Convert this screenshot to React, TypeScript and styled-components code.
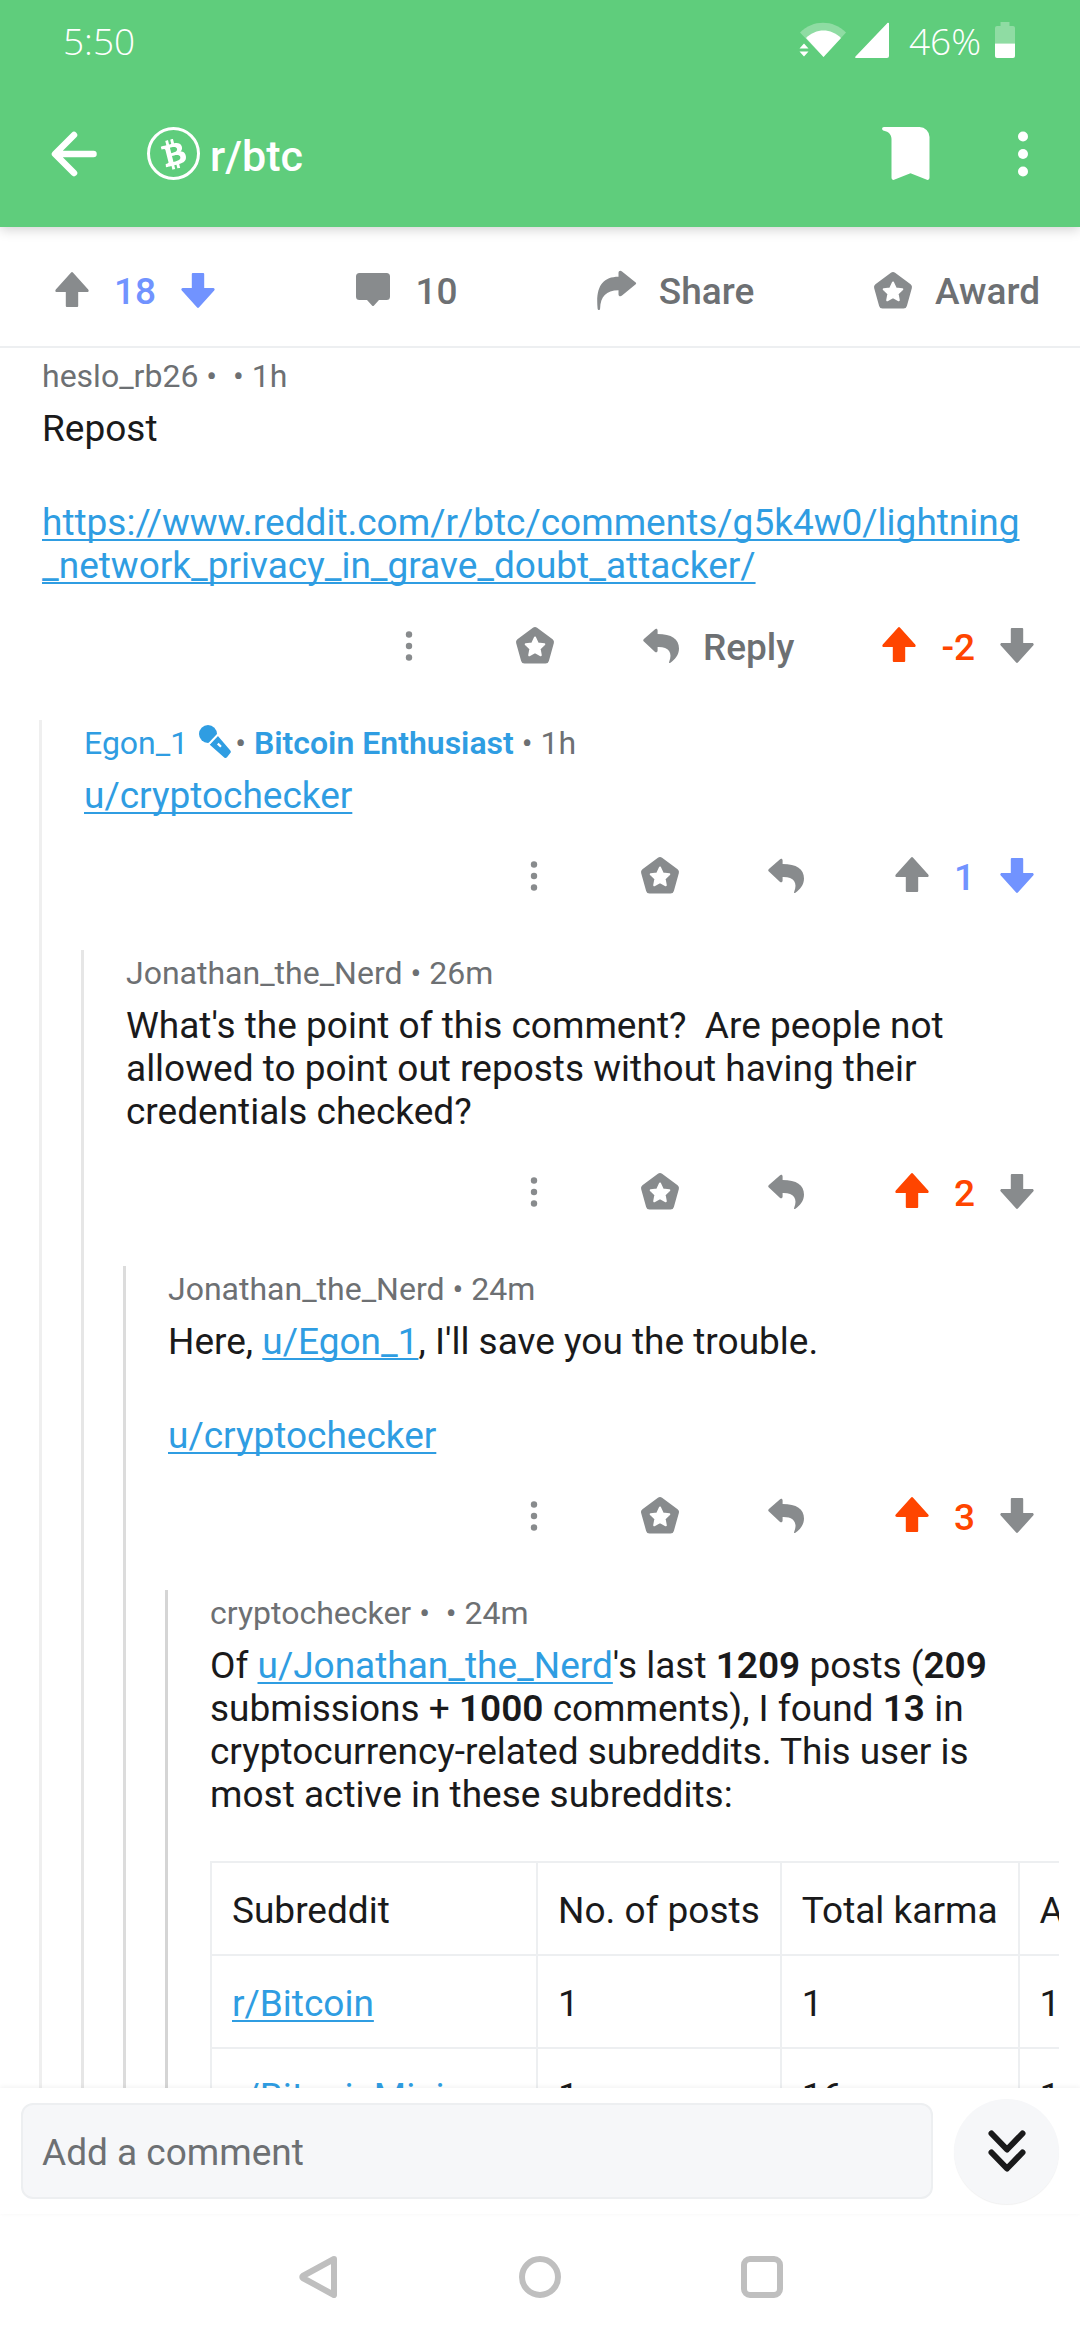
import React from "react";
import styled, { createGlobalStyle, css } from "styled-components";
import { FaBtc } from "react-icons/fa";

const color = {
  green: "#5fcd7c",
  ink: "#1a1a1b",
  meta: "#6d7073",
  icon: "#888b8d",
  link: "#2f9de2",
  up: "#ff4500",
  down: "#7193ff",
  line: "#edeff1",
  field: "#f6f7f9",
  nav: "#bfbfbf",
};

const GlobalStyle = createGlobalStyle`
  * { box-sizing: border-box; }
  body {
    margin: 0;
    background: #fff;
    color: ${color.ink};
    font-family: Roboto, "Noto Sans", sans-serif;
  }
`;

const Screen = styled.div`
  display: flex;
  flex-direction: column;
  height: 100vh;
  overflow: hidden;
`;

/* ---------- top ---------- */

const Header = styled.header`
  flex: none;
  position: relative;
  z-index: 1;
  background: ${color.green};
  color: #fff;
  box-shadow: 0 2px 12px rgba(0, 0, 0, 0.2);
`;

const StatusBar = styled.div`
  display: flex;
  align-items: center;
  justify-content: space-between;
  height: 80px;
  padding: 0 65px 0 63px;
  font-family: "Open Sans", "Noto Sans", sans-serif;
  font-weight: 350;
  font-size: 37px;
`;

const StatusIcons = styled.div`
  display: flex;
  align-items: center;
  gap: 8px;
`;

const BatteryLabel = styled.span`
  padding: 0 6px 0 12px;
`;

const Toolbar = styled.div`
  display: flex;
  align-items: center;
  height: 147px;
  padding: 0 26px 0 42px;
`;

const bareButton = css`
  display: flex;
  align-items: center;
  justify-content: center;
  margin: 0;
  padding: 0;
  border: 0;
  background: none;
  color: inherit;
  font: inherit;
`;

const ToolbarButton = styled.button`
  ${bareButton}
  width: 63px;
  height: 63px;
`;

const Community = styled.div`
  display: flex;
  flex: 1;
  align-items: center;
  gap: 10px;
  padding-left: 42px;
`;

const CommunityIcon = styled.span`
  display: flex;
  align-items: center;
  justify-content: center;
  width: 53px;
  height: 53px;
  border: 3px solid #fff;
  border-radius: 50%;
`;

const CommunityName = styled.h1`
  margin: 0;
  padding-top: 4px;
  font-size: 43px;
  font-weight: 500;
  line-height: 50px;
`;

const ToolbarActions = styled.div`
  display: flex;
  gap: 54px;
`;

/* ---------- post actions ---------- */

const PostBar = styled.div`
  flex: none;
  display: grid;
  grid-template-columns: repeat(4, minmax(0, 1fr));
  height: 121px;
  padding-top: 8px;
  border-bottom: 2px solid ${color.line};
  color: ${color.meta};
  font-size: 37px;
  font-weight: 500;
`;

const PostCell = styled.div<{ $end?: boolean }>`
  display: flex;
  align-items: center;
  justify-content: ${(p) => (p.$end ? "flex-end" : "center")};
  padding-right: ${(p) => (p.$end ? "40px" : "0")};
`;

const PostButton = styled.button`
  ${bareButton}
  gap: 21px;
`;

const Vote = styled.div`
  display: flex;
  align-items: center;
  gap: 21px;
`;

const VoteButton = styled.button<{ $tint?: string }>`
  ${bareButton}
  color: ${(p) => p.$tint ?? color.icon};
`;

const Label = styled.span`
  padding-top: 3px;
  line-height: 44px;
`;

const Score = styled(Label)<{ $tint: string }>`
  color: ${(p) => p.$tint};
`;

const Glyph = styled.svg`
  flex: none;
  display: block;
  fill: currentColor;
`;

const GrayGlyph = styled(Glyph)`
  color: ${color.icon};
`;

/* ---------- comments ---------- */

const Feed = styled.main`
  flex: 1 1 0;
  min-height: 0;
  overflow: hidden;
  padding-top: 5px;
`;

const depthLines = ["#efefef", "#e6e6e6", "#dcdcdc", "#d5d5d5"];

const Thread = styled.div<{ $depth: number }>`
  margin-left: 39px;
  border-left: 3px solid ${(p) => depthLines[p.$depth]};
`;

const CommentBox = styled.article`
  padding: 4px 42px 32px;
`;

const Meta = styled.div`
  display: flex;
  align-items: center;
  height: 38px;
  color: ${color.meta};
  font-size: 32px;
  line-height: 38px;
  white-space: pre;
`;

const OpAuthor = styled.span`
  display: flex;
  align-items: center;
  gap: 11px;
  padding-right: 4px;
  color: ${color.link};
`;

const Flair = styled.span`
  color: ${color.link};
  font-weight: 600;
`;

const Text = styled.div`
  display: flex;
  flex-direction: column;
  gap: 51px;
  margin-top: 12px;
  font-size: 37px;
  line-height: 43px;
`;

const Paragraph = styled.p`
  margin: 0;
  white-space: pre-wrap;
`;

const Link = styled.a`
  color: ${color.link};
  text-decoration: underline;
  text-decoration-thickness: 2px;
  text-decoration-skip-ink: none;
  text-underline-offset: 4px;
`;

const Strong = styled.strong`
  font-weight: 600;
`;

const CommentActions = styled.div`
  display: flex;
  justify-content: flex-end;
  align-items: center;
  height: 84px;
  margin-top: 17px;
  color: ${color.meta};
  font-size: 37px;
  font-weight: 500;
`;

const ActionButton = styled.button`
  ${bareButton}
  gap: 21px;
  height: 84px;
  padding: 0 42px;
`;

const CommentVote = styled(Vote)`
  padding-left: 42px;
`;

const TableScroll = styled.div`
  overflow: hidden;
  margin: 45px -21px 0 0;
`;

const Table = styled.table`
  border-collapse: collapse;
  font-size: 37px;
  line-height: 43px;
  white-space: nowrap;

  th,
  td {
    padding: 26px 20px 22px;
    border: 2px solid ${color.line};
    text-align: left;
    font-weight: 400;
  }

  th:first-child {
    min-width: 326px;
  }
`;

/* ---------- bottom ---------- */

const Composer = styled.form`
  flex: none;
  position: relative;
  z-index: 1;
  display: flex;
  align-items: center;
  gap: 21px;
  height: 126px;
  padding: 0 21px;
  background: #fff;
  box-shadow: 0 -1px 5px rgba(0, 0, 0, 0.06);
`;

const CommentField = styled.input`
  flex: 1;
  min-width: 0;
  height: 96px;
  padding: 2px 19px 0;
  border: 2px solid ${color.line};
  border-radius: 12px;
  background: ${color.field};
  color: ${color.ink};
  font: 400 37px Roboto, "Noto Sans", sans-serif;
  outline: none;

  &::placeholder {
    color: ${color.meta};
    opacity: 1;
  }
`;

const JumpButton = styled.button`
  ${bareButton}
  flex: none;
  width: 105px;
  height: 105px;
  border-radius: 50%;
  background: ${color.field};
  color: ${color.ink};
  box-shadow: 0 1px 1px rgba(0, 0, 0, 0.06);
`;

const NavBar = styled.nav`
  flex: none;
  display: flex;
  align-items: center;
  justify-content: center;
  gap: 180px;
  height: 126px;
  background: #fff;
  color: ${color.nav};
`;

const NavButton = styled.button`
  ${bareButton}
`;

/* ---------- icons ---------- */

const UpIcon = () => (
  <Glyph width="42" height="42" viewBox="0 0 42 42">
    <path d="M19.9 2.7a1.5 1.5 0 0 1 2.2 0L37.2 19.4c1 1.1.4 2.7-1.1 2.7H27.2V36a1 1 0 0 1-1 1H15.8a1 1 0 0 1-1-1V22.1H5.9c-1.5 0-2.1-1.6-1.1-2.7z" />
  </Glyph>
);

const DownIcon = () => (
  <Glyph width="42" height="42" viewBox="0 0 42 42">
    <path d="M19.9 37.3a1.5 1.5 0 0 0 2.2 0L37.2 20.6c1-1.1.4-2.7-1.1-2.7H27.2V4a1 1 0 0 0-1-1H15.8a1 1 0 0 0-1 1V17.9H5.9c-1.5 0-2.1 1.6-1.1 2.7z" />
  </Glyph>
);

const CommentIcon = () => (
  <GrayGlyph width="42" height="42" viewBox="0 0 42 42">
    <path d="M7.5 3h27A3.5 3.5 0 0 1 38 6.5V26.5A3.5 3.5 0 0 1 34.5 30H27l-5 5.4a1.4 1.4 0 0 1-2 0L15 30H7.5A3.5 3.5 0 0 1 4 26.5V6.5A3.5 3.5 0 0 1 7.5 3z" />
  </GrayGlyph>
);

const ShareIcon = () => (
  <GrayGlyph width="42" height="42" viewBox="0 0 42 42">
    <path d="M22.5 3c0-2.2 2-2.8 3.5-1.5L39.4 12.2c1 .8 1 1.6 0 2.4L26 25.6c-1.500 1.300-3.500.7-3.500-1.400V20.300C10 20.500 4.600 26.500 4.100 38.500c-.1 2-2.300 2-2.500 0C-.5 17.500 6 6.800 22.500 6.800z" />
  </GrayGlyph>
);

const ReplyIcon = () => (
  <GrayGlyph width="42" height="42" viewBox="0 0 42 42">
    <path d="M14.8 4.400c1.400-1.100 2.800-.5 2.800 1.200V9C31.500 9 39 14 39 23.500 39 30 35 34.500 30.400 37.800c-1 .7-1.700.2-1.200-1C33 27.500 28.500 21.600 17.600 22v3.500c0 1.700-1.400 2.300-2.800 1.200L3.900 16.600c-.9-.8-.9-1.800 0-2.600z" />
  </GrayGlyph>
);

const AwardIcon = () => (
  <GrayGlyph width="42" height="42" viewBox="0 0 42 42">
    <path
      d="M21 5.500 36.500 17 31.500 35H10.500L5.500 17z"
      stroke="currentColor"
      strokeWidth="7"
      strokeLinejoin="round"
    />
    <path
      d="M21 12.500l2.800 5.900 6.500.9-4.700 4.500 1.200 6.500L21 27.100l-5.800 3.200 1.200-6.500-4.700-4.500 6.500-.9z"
      fill="#fff"
      stroke="#fff"
      strokeWidth="2"
      strokeLinejoin="round"
    />
  </GrayGlyph>
);

const DotsIcon = () => (
  <GrayGlyph width="42" height="42" viewBox="0 0 42 42">
    <circle cx="21" cy="9.500" r="3.200" />
    <circle cx="21" cy="21" r="3.200" />
    <circle cx="21" cy="32.500" r="3.200" />
  </GrayGlyph>
);

const MicIcon = () => (
  <Glyph width="32" height="36" viewBox="0 0 32 36">
    <circle cx="9" cy="9" r="9" />
    <path d="M18.500 10.500 31.300 25.500a2 2 0 0 1 0 2.600L28 32.300a2 2 0 0 1-2.800.2L10.500 19.500z" />
    <path d="M19.500 9 8.500 20.500" stroke="#fff" strokeWidth="2" />
    <path d="M18.800 18.600l3.200 3.200" stroke="#fff" strokeWidth="2.200" />
  </Glyph>
);

/* ---------- comment parts ---------- */

type Direction = "up" | "down";

const VoteControls = ({ score, voted }: { score: string; voted: Direction }) => (
  <>
    <VoteButton aria-label="Upvote" $tint={voted === "up" ? color.up : undefined}>
      <UpIcon />
    </VoteButton>
    <Score $tint={color[voted]}>{score}</Score>
    <VoteButton aria-label="Downvote" $tint={voted === "down" ? color.down : undefined}>
      <DownIcon />
    </VoteButton>
  </>
);

type CommentProps = {
  meta: React.ReactNode;
  children: React.ReactNode;
  score?: string;
  voted?: Direction;
  replyLabel?: boolean;
};

const Comment = ({ meta, children, score, voted = "up", replyLabel }: CommentProps) => (
  <CommentBox>
    <Meta>{meta}</Meta>
    {children}
    {score && (
      <CommentActions>
        <ActionButton aria-label="More">
          <DotsIcon />
        </ActionButton>
        <ActionButton aria-label="Award">
          <AwardIcon />
        </ActionButton>
        <ActionButton aria-label="Reply">
          <ReplyIcon />
          {replyLabel && <Label>Reply</Label>}
        </ActionButton>
        <CommentVote>
          <VoteControls score={score} voted={voted} />
        </CommentVote>
      </CommentActions>
    )}
  </CommentBox>
);

const rows = [
  ["r/Bitcoin", "1", "1", "1"],
  ["r/BitcoinMining", "1", "16", "1"],
];

export default function App() {
  return (
    <Screen>
      <GlobalStyle />
      <Header>
        <StatusBar>
          <span>5:50</span>
          <StatusIcons>
            <Glyph width="48" height="36" viewBox="0 0 48 36">
              <path d="M1 10.500C14-2.500 34-2.500 47 10.500L24.500 35z" opacity=".3" />
              <path d="M7 16C17 6 32 6 42 16L24.500 35z" />
              <path d="M.5 26.500 5 21.500l4.500 5zM.5 29.500h9L5 34.500z" />
            </Glyph>
            <Glyph width="34" height="36" viewBox="0 0 34 36">
              <path d="M.5 34.500 32 1.500a1 1 0 0 1 2 .5V34a2 2 0 0 1-2 2H1c-1 0-1.200-.8-.5-1.500z" />
            </Glyph>
            <BatteryLabel>46%</BatteryLabel>
            <Glyph width="20" height="36" viewBox="0 0 20 36">
              <path d="M5.500 0h9v4H18a2 2 0 0 1 2 2v15.500H0V6a2 2 0 0 1 2-2h3.500z" opacity=".3" />
              <path d="M0 21.500h20V34a2 2 0 0 1-2 2H2a2 2 0 0 1-2-2z" />
            </Glyph>
          </StatusIcons>
        </StatusBar>
        <Toolbar>
          <ToolbarButton aria-label="Back">
            <Glyph width="46" height="46" viewBox="0 0 46 46">
              <path
                d="M23 4 4 23l19 19M4.500 23H42.500"
                fill="none"
                stroke="currentColor"
                strokeWidth="6.500"
                strokeLinecap="round"
                strokeLinejoin="round"
              />
            </Glyph>
          </ToolbarButton>
          <Community>
            <CommunityIcon>
              <FaBtc size={30} transform="rotate(-14)" />
            </CommunityIcon>
            <CommunityName>r/btc</CommunityName>
          </Community>
          <ToolbarActions>
            <ToolbarButton aria-label="Save">
              <Glyph width="48" height="53" viewBox="0 0 48 53">
                <path d="M2 0H37.500A10 10 0 0 1 47.500 10V50.500c0 2-1.500 2.900-3.200 2.100L28.500 46.200 12.700 52.600C11 53.400 9.500 52.500 9.500 50.500V12C9.500 7.500 6.500 4.500 2 3.700-.5 3.200-.5 0 2 0z" />
              </Glyph>
            </ToolbarButton>
            <ToolbarButton aria-label="Menu">
              <Glyph width="46" height="46" viewBox="0 0 46 46">
                <circle cx="23" cy="5.500" r="5" />
                <circle cx="23" cy="23" r="5" />
                <circle cx="23" cy="40.500" r="5" />
              </Glyph>
            </ToolbarButton>
          </ToolbarActions>
        </Toolbar>
      </Header>

      <PostBar>
        <PostCell>
          <Vote>
            <VoteControls score="18" voted="down" />
          </Vote>
        </PostCell>
        <PostCell>
          <PostButton>
            <CommentIcon />
            <Label>10</Label>
          </PostButton>
        </PostCell>
        <PostCell>
          <PostButton>
            <ShareIcon />
            <Label>Share</Label>
          </PostButton>
        </PostCell>
        <PostCell $end>
          <PostButton>
            <AwardIcon />
            <Label>Award</Label>
          </PostButton>
        </PostCell>
      </PostBar>

      <Feed>
        <Comment meta="heslo_rb26 •  • 1h" score="-2" replyLabel>
          <Text>
            <Paragraph>Repost</Paragraph>
            <Paragraph>
              <Link href="#lightning">
                https://www.reddit.com/r/btc/comments/g5k4w0/lightning
                <wbr />
                _network_privacy_in_grave_doubt_attacker/
              </Link>
            </Paragraph>
          </Text>
        </Comment>
        <Thread $depth={0}>
          <Comment
            meta={
              <>
                <OpAuthor>
                  Egon_1
                  <MicIcon />
                </OpAuthor>
                {"• "}
                <Flair>Bitcoin Enthusiast</Flair>
                {" • 1h"}
              </>
            }
            score="1"
            voted="down"
          >
            <Text>
              <Paragraph>
                <Link href="#cryptochecker">u/cryptochecker</Link>
              </Paragraph>
            </Text>
          </Comment>
          <Thread $depth={1}>
            <Comment meta="Jonathan_the_Nerd • 26m" score="2">
              <Text>
                <Paragraph>
                  {"What's the point of this comment?  Are people not allowed to point out reposts without having their credentials checked?"}
                </Paragraph>
              </Text>
            </Comment>
            <Thread $depth={2}>
              <Comment meta="Jonathan_the_Nerd • 24m" score="3">
                <Text>
                  <Paragraph>
                    Here, <Link href="#egon">u/Egon_1</Link>, I'll save you the trouble.
                  </Paragraph>
                  <Paragraph>
                    <Link href="#cryptochecker">u/cryptochecker</Link>
                  </Paragraph>
                </Text>
              </Comment>
              <Thread $depth={3}>
                <Comment meta="cryptochecker •  • 24m">
                  <Text>
                    <Paragraph>
                      Of <Link href="#jonathan">u/Jonathan_the_Nerd</Link>'s last <Strong>1209</Strong> posts (
                      <Strong>209</Strong> submissions + <Strong>1000</Strong> comments), I found{" "}
                      <Strong>13</Strong> in cryptocurrency-related subreddits. This user is most active in these
                      subreddits:
                    </Paragraph>
                  </Text>
                  <TableScroll>
                    <Table>
                      <thead>
                        <tr>
                          <th>Subreddit</th>
                          <th>No. of posts</th>
                          <th>Total karma</th>
                          <th>Average</th>
                        </tr>
                      </thead>
                      <tbody>
                        {rows.map(([name, posts, total, average]) => (
                          <tr key={name}>
                            <td>
                              <Link href="#subreddit">{name}</Link>
                            </td>
                            <td>{posts}</td>
                            <td>{total}</td>
                            <td>{average}</td>
                          </tr>
                        ))}
                      </tbody>
                    </Table>
                  </TableScroll>
                </Comment>
              </Thread>
            </Thread>
          </Thread>
        </Thread>
      </Feed>

      <Composer onSubmit={(e) => e.preventDefault()}>
        <CommentField type="text" aria-label="Add a comment" placeholder="Add a comment" />
        <JumpButton type="button" aria-label="Next comment">
          <Glyph width="42" height="44" viewBox="0 0 42 44">
            <path
              d="M5.500 4.500 21 20.500 36.500 4.500M5.500 23.500 21 39.500 36.500 23.500"
              fill="none"
              stroke="currentColor"
              strokeWidth="6"
              strokeLinecap="round"
              strokeLinejoin="round"
            />
          </Glyph>
        </JumpButton>
      </Composer>
      <NavBar>
        <NavButton aria-label="Back">
          <Glyph width="42" height="42" viewBox="0 0 42 42">
            <path
              d="M37 3 5.800 20a1.200 1.200 0 0 0 0 2L37 39z"
              fill="none"
              stroke="currentColor"
              strokeWidth="6"
              strokeLinejoin="round"
            />
          </Glyph>
        </NavButton>
        <NavButton aria-label="Home">
          <Glyph width="42" height="42" viewBox="0 0 42 42">
            <circle cx="21" cy="21" r="18" fill="none" stroke="currentColor" strokeWidth="6" />
          </Glyph>
        </NavButton>
        <NavButton aria-label="Recents">
          <Glyph width="42" height="42" viewBox="0 0 42 42">
            <rect x="3" y="3" width="36" height="36" rx="6" fill="none" stroke="currentColor" strokeWidth="6" />
          </Glyph>
        </NavButton>
      </NavBar>
    </Screen>
  );
}
